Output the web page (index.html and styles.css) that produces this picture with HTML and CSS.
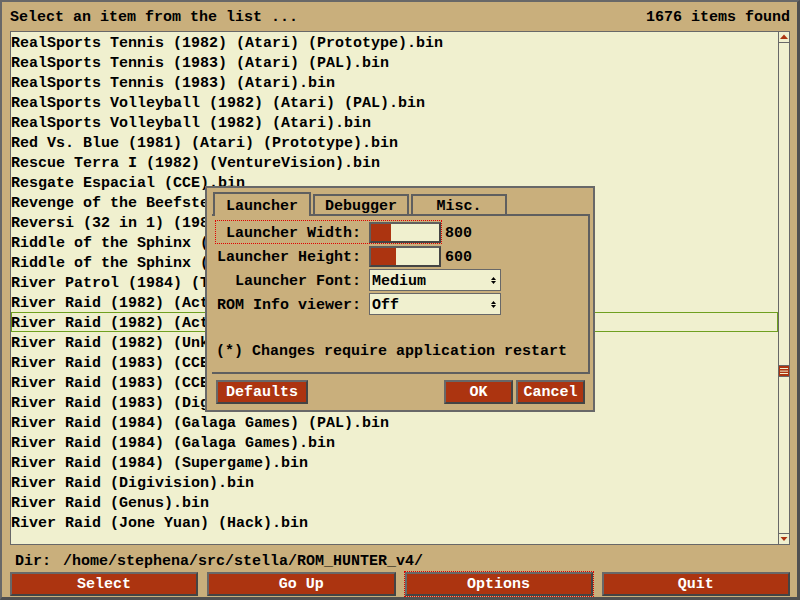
FILE: index.html
```html
<!DOCTYPE html>
<html>
<head>
<meta charset="utf-8">
<link rel="stylesheet" href="styles.css">
</head>
<body>
<div class="window">
  <div class="header"><span>Select an item from the list ...</span><span>1676 items found</span></div>
  <div class="list">
    <div class="rows">
      <div class="row">RealSports Tennis (1982) (Atari) (Prototype).bin</div>
      <div class="row">RealSports Tennis (1983) (Atari) (PAL).bin</div>
      <div class="row">RealSports Tennis (1983) (Atari).bin</div>
      <div class="row">RealSports Volleyball (1982) (Atari) (PAL).bin</div>
      <div class="row">RealSports Volleyball (1982) (Atari).bin</div>
      <div class="row">Red Vs. Blue (1981) (Atari) (Prototype).bin</div>
      <div class="row">Rescue Terra I (1982) (VentureVision).bin</div>
      <div class="row">Resgate Espacial (CCE).bin</div>
      <div class="row">Revenge of the Beefsteak Tomatoes (1982) (20th Century Fox).bin</div>
      <div class="row">Reversi (32 in 1) (1988) (Atari) (PAL).bin</div>
      <div class="row">Riddle of the Sphinx (1982) (Imagic) (PAL).bin</div>
      <div class="row">Riddle of the Sphinx (1982) (Imagic).bin</div>
      <div class="row">River Patrol (1984) (Tigervision).bin</div>
      <div class="row">River Raid (1982) (Activision) (PAL).bin</div>
      <div class="row sel">River Raid (1982) (Activision).bin</div>
      <div class="row">River Raid (1982) (Unknown).bin</div>
      <div class="row">River Raid (1983) (CCE) (PAL).bin</div>
      <div class="row">River Raid (1983) (CCE).bin</div>
      <div class="row">River Raid (1983) (Digivision).bin</div>
      <div class="row">River Raid (1984) (Galaga Games) (PAL).bin</div>
      <div class="row">River Raid (1984) (Galaga Games).bin</div>
      <div class="row">River Raid (1984) (Supergame).bin</div>
      <div class="row">River Raid (Digivision).bin</div>
      <div class="row">River Raid (Genus).bin</div>
      <div class="row">River Raid (Jone Yuan) (Hack).bin</div>
    </div>
    <div class="scrollbar">
      <div class="sb-btn sb-up"><svg width="10" height="10" viewBox="0 0 10 10"><polygon points="1,7 5,2.5 9,7" fill="#ac3410"/></svg></div>
      <div class="sb-track">
        <div class="sb-thumb" style="top:322px"><svg width="10" height="10" viewBox="0 0 10 10"><rect x="1" y="2" width="8" height="1" fill="#f0f0cf"/><rect x="1" y="4.6" width="8" height="1" fill="#f0f0cf"/><rect x="1" y="7" width="8" height="1" fill="#f0f0cf"/></svg></div>
      </div>
      <div class="sb-btn sb-down"><svg width="10" height="10" viewBox="0 0 10 10"><polygon points="1.5,3 8.5,3 5,7" fill="#ac3410"/></svg></div>
    </div>
  </div>
  <div class="dir"><span>Dir:</span><span class="path">/home/stephena/src/stella/ROM_HUNTER_v4/</span></div>
  <div class="buttons">
    <div class="btn">Select</div>
    <div class="btn">Go Up</div>
    <div class="btn focus">Options</div>
    <div class="btn">Quit</div>
  </div>

  <div class="dialog">
    <div class="tabbar">
      <div class="tab active">Launcher</div>
      <div class="tab">Debugger</div>
      <div class="tab">Misc.</div>
    </div>
    <div class="panel">
      <div class="prow">
        <div class="focusbox">
          <span class="label">Launcher Width:</span><span class="slider"><span class="fill" style="width:20px"></span></span>
        </div>
        <span class="value">800</span>
      </div>
      <div class="prow">
        <span class="label">Launcher Height:</span><span class="slider"><span class="fill" style="width:25px"></span></span>
        <span class="value">600</span>
      </div>
      <div class="prow">
        <span class="label">Launcher Font:</span>
        <span class="popup"><span>Medium</span><svg width="5" height="7" viewBox="0 0 5 7"><polygon points="0,3 2.5,0 5,3" fill="#000"/><polygon points="0,4 5,4 2.5,7" fill="#000"/></svg></span>
      </div>
      <div class="prow">
        <span class="label">ROM Info viewer:</span>
        <span class="popup"><span>Off</span><svg width="5" height="7" viewBox="0 0 5 7"><polygon points="0,3 2.5,0 5,3" fill="#000"/><polygon points="0,4 5,4 2.5,7" fill="#000"/></svg></span>
      </div>
      <div class="note">(*) Changes require application restart</div>
    </div>
    <div class="dbuttons">
      <div class="btn dbtn-defaults">Defaults</div>
      <div class="dspacer"></div>
      <div class="btn dbtn-small">OK</div>
      <div class="btn dbtn-small dbtn-cancel">Cancel</div>
    </div>
  </div>
</div>
</body>
</html>
```

FILE: styles.css
```css
html, body {
  margin: 0;
  padding: 0;
}
body {
  font-family: "Liberation Mono", "DejaVu Sans Mono", monospace;
  font-size: 15px;
  font-weight: bold;
  color: #000;
  background: #c9af7c;
}
.window {
  position: relative;
  width: 800px;
  height: 600px;
  box-sizing: border-box;
  background: #c9af7c;
  border-left: 2px solid #686868;
  border-top: 2px solid #686868;
  border-right: 3px solid #505050;
  border-bottom: 3px solid #505050;
  padding: 0 7px 1px 8px;
  display: flex;
  flex-direction: column;
  overflow: hidden;
}
.header {
  height: 29px;
  box-sizing: border-box;
  padding-top: 3px;
  display: flex;
  justify-content: space-between;
  align-items: center;
  line-height: 20px;
  white-space: pre;
}
.list {
  height: 514px;
  box-sizing: border-box;
  border: 1px solid #686868;
  background: #f0f0cf;
  display: flex;
}
.rows {
  flex: 1;
  overflow: hidden;
}
.row {
  height: 20px;
  line-height: 24px;
  white-space: pre;
  box-sizing: border-box;
}
.row.sel {
  box-shadow: inset 0 0 0 1px #6fa020;
}
.scrollbar {
  width: 11px;
  box-sizing: border-box;
  border-left: 1px solid #686868;
  display: flex;
  flex-direction: column;
}
.sb-btn {
  height: 11px;
  box-sizing: border-box;
}
.sb-btn svg {
  display: block;
}
.sb-up {
  border-bottom: 1px solid #686868;
}
.sb-down {
  border-top: 1px solid #686868;
}
.sb-track {
  flex: 1;
  position: relative;
}
.sb-thumb {
  position: absolute;
  left: -1px;
  width: 12px;
  height: 12px;
  box-sizing: border-box;
  border: 1px solid #686868;
  background: #ac3410;
}
.sb-thumb svg {
  display: block;
}
.dir {
  height: 27px;
  box-sizing: border-box;
  padding: 7px 0 0 5px;
  line-height: 20px;
  white-space: pre;
  display: flex;
}
.path {
  margin-left: 12px;
}
.buttons {
  display: flex;
  gap: 9px;
  height: 24px;
}
.btn {
  box-sizing: border-box;
  height: 24px;
  background: #ac3410;
  color: #fff;
  font-weight: bold;
  text-align: center;
  line-height: 22px;
  border: 2px solid #686868;
  border-right-color: #444;
  border-bottom-color: #444;
  white-space: pre;
}
.buttons .btn {
  flex: 1;
}
.btn.focus {
  outline: 1px dotted #e00000;
  outline-offset: 0;
}

/* dialog */
.dialog {
  position: absolute;
  left: 203px;
  top: 184px;
  width: 390px;
  height: 226px;
  box-sizing: border-box;
  border: 2px solid #686868;
  background: #c9af7c;
  padding: 4px 3px 0 5px;
}
.tabbar {
  display: flex;
  align-items: flex-end;
  height: 24px;
  box-sizing: border-box;
  border-bottom: 2px solid #5f5f5f;
  padding-left: 1px;
}
.tab {
  box-sizing: border-box;
  width: 96px;
  height: 20px;
  border: 2px solid #5f5f5f;
  border-bottom: none;
  padding-top: 2px;
  line-height: 18px;
  text-align: center;
  white-space: pre;
  margin-right: 2px;
}
.tab.active {
  width: 98px;
  height: 24px;
  margin-bottom: -2px;
  padding-top: 4px;
  background: #c9af7c;
  position: relative;
}
.panel {
  height: 158px;
  box-sizing: border-box;
  border-right: 2px solid #5f5f5f;
  border-bottom: 2px solid #5f5f5f;
  padding: 4px 0 0 4px;
}
.prow {
  height: 24px;
  display: flex;
  align-items: center;
  line-height: 20px;
  white-space: pre;
}
.prow .label, .prow .value, .popup span {
  padding-top: 3px;
}
.focusbox {
  display: flex;
  align-items: center;
  height: 22px;
  outline: 1px dotted #e00000;
}
.label {
  width: 145px;
  margin-right: 8px;
  text-align: right;
  white-space: pre;
}
.slider {
  display: flex;
  width: 72px;
  height: 21px;
  box-sizing: border-box;
  border: 2px solid #5f5f5f;
  border-right-color: #444;
  border-bottom-color: #444;
  background: #f0f0cf;
}
.fill {
  display: block;
  height: 100%;
  background: #ac3410;
}
.value {
  margin-left: 4px;
}
.popup {
  width: 132px;
  height: 22px;
  box-sizing: border-box;
  border: 1px solid #686868;
  background: #f0f0cf;
  display: flex;
  align-items: center;
  justify-content: space-between;
  padding: 0 4px 0 2px;
  line-height: 20px;
}
.popup svg {
  display: block;
}
.note {
  margin-top: 26px;
  line-height: 20px;
  white-space: pre;
}
.dbuttons {
  display: flex;
  margin-top: 6px;
  padding: 0 5px 0 4px;
}
.dbtn-defaults {
  width: 92px;
}
.dspacer {
  flex: 1;
}
.dbtn-small {
  width: 69px;
}
.dbtn-cancel {
  margin-left: 3px;
}
```
